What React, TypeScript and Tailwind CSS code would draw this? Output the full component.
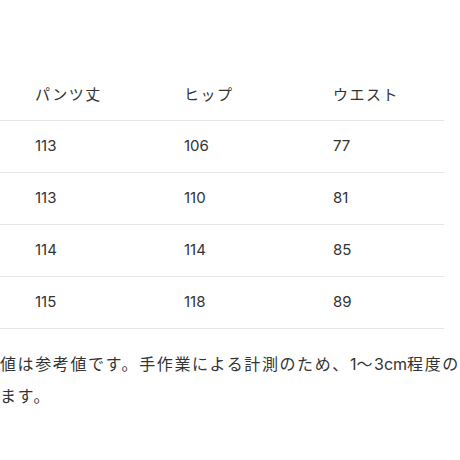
const headers = ['パンツ丈', 'ヒップ', 'ウエスト']

const rows = [
  ['113', '106', '77'],
  ['113', '110', '81'],
  ['114', '114', '85'],
  ['115', '118', '89'],
]

const cols = 'grid grid-cols-[184px_149px_111px]'

export default function App() {
  return (
    <div
      className="w-[460px] h-[460px] overflow-hidden bg-white text-[#333333]"
      style={{ fontFamily: 'Inter, "Noto Sans CJK JP", sans-serif' }}
    >
      <div className="pt-[70px] w-[444px] text-[15px]">
        <div className={`${cols} h-[51px] items-center border-b border-[#e6e6e6] tracking-[0.1em]`}>
          {headers.map((h, i) => (
            <div key={h} className={i === 0 ? 'pl-[35px]' : ''}>
              {h}
            </div>
          ))}
        </div>
        {rows.map((r, ri) => (
          <div key={ri} className={`${cols} h-[52px] items-center border-b border-[#e6e6e6]`}>
            {r.map((c, i) => (
              <div key={i} className={i === 0 ? 'pl-[35px]' : ''}>
                {c}
              </div>
            ))}
          </div>
        ))}
      </div>

      {/* note text, cut off at both sides like the page */}
      <div className="mt-[19px] text-[16px] leading-[32px] tracking-[0.1em] whitespace-nowrap">
        <p>
          値は参考値です。手作業による計測のため、<span className="tracking-normal">1</span>～
          <span className="tracking-normal">3cm</span>程度の誤差が生じる場合がございます。
        </p>
        <p>ます。</p>
      </div>
    </div>
  )
}
